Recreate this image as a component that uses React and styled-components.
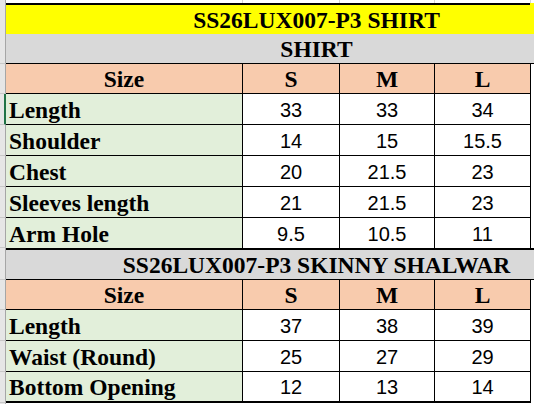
import styled, { createGlobalStyle } from "styled-components"

const GlobalStyle = createGlobalStyle`
  * {
    box-sizing: border-box;
  }
  body {
    margin: 0;
    background: #ffffff;
  }
`

const tones = {
  yellow: "#ffff00",
  gray: "#d9d9d9",
  peach: "#f8cbad",
  green: "#e2efda",
  white: "#ffffff",
}

const Viewport = styled.div`
  width: 534px;
  height: 404px;
  overflow: hidden;
`

const Sheet = styled.div`
  width: 627px;
  display: flex;
  flex-direction: column;
  font-family: "Liberation Serif", "Times New Roman", serif;
  color: #000;
`

const Row = styled.div`
  display: grid;
  grid-template-columns: 6px 237px 97px 95px 96px 96px;
  height: ${(props) => props.$h}px;
`

const RowHead = styled.div`
  background: #e6e6e6;
  border-right: ${(props) => props.$selected ? "2px solid #217346" : "1px solid #a6a6a6"};
  border-bottom: ${(props) => props.$last ? "0" : "1px solid #c8c8c8"};
`

const GridLine = styled.div`
  border-right: 1px solid #d4d4d4;
`

const Banner = styled.div`
  grid-column: 2 / 7;
  display: flex;
  align-items: center;
  justify-content: center;
  background: ${(props) => props.$top
    ? `linear-gradient(#000, #000) 0 0 / 524px 2px no-repeat, ${tones[props.$tone]}`
    : tones[props.$tone]};
  padding-top: ${(props) => props.$top ? "4px" : "2px"};
  border-top: ${(props) => props.$thick ? "2px solid #000" : "0"};
  border-bottom: 1px solid #000;
  font-weight: bold;
  font-size: 23.5px;
`

const Cell = styled.div`
  display: flex;
  align-items: center;
  justify-content: ${(props) => props.$left ? "flex-start" : "center"};
  padding-left: ${(props) => props.$left ? "3px" : "0"};
  padding-top: 2px;
  background: ${(props) => tones[props.$tone]};
  border-right: 1px solid #000;
  border-bottom: ${(props) => props.$bottom}px solid #000;
  font-family: ${(props) => props.$num ? `"Liberation Sans", Arial, sans-serif` : "inherit"};
  font-weight: ${(props) => props.$num ? "normal" : "bold"};
  font-size: ${(props) => props.$num ? "20px" : "23.5px"};
  white-space: nowrap;
`

const Blank = styled.div``

const shirt = [
  ["Length", "33", "33", "34"],
  ["Shoulder", "14", "15", "15.5"],
  ["Chest", "20", "21.5", "23"],
  ["Sleeves length", "21", "21.5", "23"],
  ["Arm Hole", "9.5", "10.5", "11"],
]

const shalwar = [
  ["Length", "37", "38", "39"],
  ["Waist (Round)", "25", "27", "29"],
  ["Bottom Opening", "12", "13", "14"],
]

function HeaderRow() {
  return (
    <Row $h={30}>
      <RowHead />
      <Cell $tone="peach" $bottom={1}>Size</Cell>
      <Cell $tone="peach" $bottom={1}>S</Cell>
      <Cell $tone="peach" $bottom={1}>M</Cell>
      <Cell $tone="peach" $bottom={1}>L</Cell>
      <Blank />
    </Row>
  )
}

function DataRow({ item, h, bottom, selected }) {
  const [label, ...values] = item
  return (
    <Row $h={h}>
      <RowHead $selected={selected} />
      <Cell $tone="green" $left $bottom={bottom}>{label}</Cell>
      {values.map((v, i) => (
        <Cell key={i} $tone="white" $num $bottom={bottom}>{v}</Cell>
      ))}
      <Blank />
    </Row>
  )
}

export default function App() {
  return (
    <>
      <GlobalStyle />
      <Viewport>
        <Sheet>
          <Row $h={3}>
            <RowHead $last />
            <GridLine />
            <GridLine />
            <GridLine />
            <GridLine />
            <Blank />
          </Row>
          <Row $h={31}>
            <RowHead />
            <Banner $tone="yellow" $top>SS26LUX007-P3 SHIRT</Banner>
          </Row>
          <Row $h={30}>
            <RowHead />
            <Banner $tone="gray">SHIRT</Banner>
          </Row>
          <HeaderRow />
          {shirt.map((item, i) => (
            <DataRow
              key={item[0]}
              item={item}
              h={i === shirt.length - 1 ? 30 : 31}
              bottom={i === shirt.length - 1 ? 0 : 1}
              selected={i === 0}
            />
          ))}
          <Row $h={32}>
            <RowHead />
            <Banner $tone="gray" $thick>SS26LUX007-P3 SKINNY SHALWAR</Banner>
          </Row>
          <HeaderRow />
          {shalwar.map((item, i) => (
            <DataRow
              key={item[0]}
              item={item}
              h={31}
              bottom={i === shalwar.length - 1 ? 2 : 1}
            />
          ))}
          <Row $h={4}>
            <RowHead $last />
            <Blank />
          </Row>
        </Sheet>
      </Viewport>
    </>
  )
}
